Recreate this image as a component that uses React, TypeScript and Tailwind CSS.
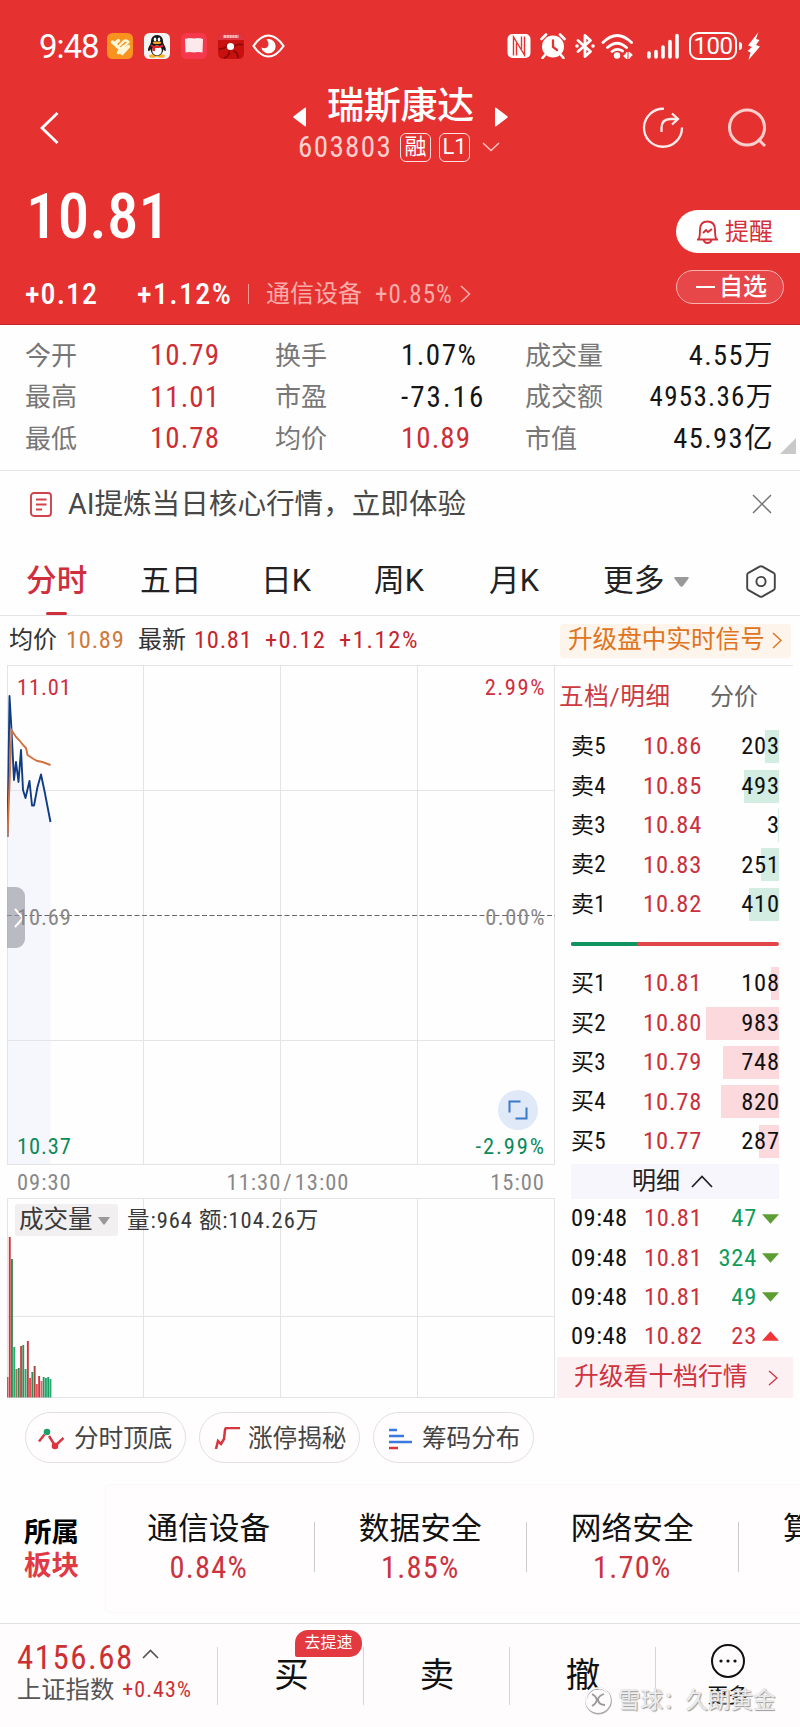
import React from 'react';

const num = "[font-family:'Roboto_Condensed','Noto_Sans_CJK_SC',sans-serif]";

const stats = [
  ['今开', '10.79', '换手', '1.07%', '成交量', '4.55万'],
  ['最高', '11.01', '市盈', '-73.16', '成交额', '4953.36万'],
  ['最低', '10.78', '均价', '10.89', '市值', '45.93亿'],
];

const sells = [
  { label: '卖5', price: '10.86', qty: 203, bar: 14 },
  { label: '卖4', price: '10.85', qty: 493, bar: 35 },
  { label: '卖3', price: '10.84', qty: 3, bar: 1 },
  { label: '卖2', price: '10.83', qty: 251, bar: 18 },
  { label: '卖1', price: '10.82', qty: 410, bar: 30 },
];

const buys = [
  { label: '买1', price: '10.81', qty: 108, bar: 8 },
  { label: '买2', price: '10.80', qty: 983, bar: 73 },
  { label: '买3', price: '10.79', qty: 748, bar: 56 },
  { label: '买4', price: '10.78', qty: 820, bar: 58 },
  { label: '买5', price: '10.77', qty: 287, bar: 20 },
];

const trades = [
  { time: '09:48', price: '10.81', qty: 47, up: false },
  { time: '09:48', price: '10.81', qty: 324, up: false },
  { time: '09:48', price: '10.81', qty: 49, up: false },
  { time: '09:48', price: '10.82', qty: 23, up: true },
];

const sectors = [
  { name: '通信设备', pct: '0.84%' },
  { name: '数据安全', pct: '1.85%' },
  { name: '网络安全', pct: '1.70%' },
];

/* x, top, colour of each minute's volume bar; all stand on y = 199.5 */
const volumes: [number, number, string][] = [
  [0, 179, '#d94a52'], [2.3, 39, '#d0353c'], [4.5, 61, '#2f8a55'], [6.8, 149, '#1fae6c'],
  [9, 171, '#a0705a'], [11.3, 170, '#2f8a55'], [13.6, 148, '#c8454a'], [15.8, 147, '#3c8a55'],
  [18.1, 171, '#1fae6c'], [20.4, 143, '#d0353c'], [22.6, 180, '#e05058'], [24.9, 174, '#2f8a55'],
  [27.2, 168, '#a0453f'], [29.4, 186, '#e8505a'], [31.7, 178, '#d0353c'], [34, 183, '#e8606a'],
  [36.2, 179, '#1f9a60'], [38.5, 180, '#1fae6c'], [40.8, 179, '#1f9a60'], [43, 181, '#1fae6c'],
];

function StatusBar() {
  return (
    <div className="flex h-[92px] items-center pl-[39px] pr-[40px] text-white">
      <span className="w-[68px] text-[33px] leading-none tracking-[-0.03em]">9:48</span>
      <div className="flex items-center gap-[11px]">
        <svg width="26" height="26" viewBox="0 0 26 26">
          <rect width="26" height="26" rx="5.500" fill="#f7931e" />
          <path d="M5.500 9L12.500 15.500M11.500 7.500l-4 3.500M11.500 19.500L17 13.500M15 20.500L21.500 13.500" stroke="#fff6d8" strokeWidth="3.400" strokeLinecap="round" fill="none" />
          <path d="M12.500 12.500l4.500-4.500q2.500-1.500 4.500 1L17 13.500" stroke="#fff6d8" strokeWidth="2.400" strokeLinecap="round" fill="none" />
        </svg>
        <svg width="26" height="26" viewBox="0 0 26 26">
          <rect width="26" height="26" rx="5.500" fill="#f4f4f4" />
          <ellipse cx="9" cy="23" rx="4" ry="1.800" fill="#f4b52a" />
          <ellipse cx="17" cy="23" rx="4" ry="1.800" fill="#f4b52a" />
          <path d="M13 2c-4 0-6 3-6 6.500 0 2-1 3-2 5s-1.500 4-.5 4.500S6 17 6.500 16c.5 4 3 7 6.500 7s6-3 6.500-7c.5 1 1.500 2.500 2 2s.5-2.500-.5-4.500-2-3-2-5C19 5 17 2 13 2z" fill="#15151a" />
          <ellipse cx="13" cy="17.500" rx="4.800" ry="5" fill="#fff" />
          <ellipse cx="11" cy="6.500" rx="1.300" ry="1.900" fill="#fff" />
          <ellipse cx="15" cy="6.500" rx="1.300" ry="1.900" fill="#fff" />
          <ellipse cx="13" cy="9.800" rx="4.300" ry="1.300" fill="#f6a821" />
          <path d="M7 11.500c4 2 8 2 12 0l.5 2c-3 1.500-6 1.800-8.500 1.400V18H8.500v-4L6.500 13z" fill="#e3262d" />
        </svg>
        <svg width="26" height="26" viewBox="0 0 26 26">
          <rect width="26" height="26" rx="5.500" fill="#f5384c" />
          <path d="M4 6Q8.500 4.500 13 5.500q4.500-1 9 .5L21.500 19.500q-4.500-1-8.500 0-4-1-8.500 0z" fill="#fbe9ec" />
        </svg>
        <svg width="26" height="26" viewBox="0 0 26 26">
          <rect width="26" height="26" rx="5.500" fill="#c8100f" />
          <path d="M0 7V5.500A5.500 5.500 0 0 1 5.500 0h15A5.500 5.500 0 0 1 26 5.500V7z" fill="#e03540" />
          <path d="M5.500 3.500h15" stroke="#f7b9b6" strokeWidth="3" strokeDasharray="2.500 .4" />
          <path d="M1 16q7 0 9-5M6 25q7-3 5-8M20 25q0-6-5-7M25 12q-6-2-9 2" stroke="#8e0808" strokeWidth="1.800" fill="none" />
          <circle cx="12.500" cy="13.500" r="3.600" fill="#fff" />
        </svg>
        <svg className="-ml-[3px]" width="33" height="24" viewBox="0 0 33 24">
          <path d="M1.500 12Q8.500 1.500 16.500 1.500T31.500 12Q24.500 22.500 16.500 22.500T1.500 12z" fill="none" stroke="#fff" strokeWidth="2.200" />
          <path d="M16.500 5a7.200 7.200 0 1 1-7.200 8.200c2.500 2 7.200 1 7.200-3 0-2-.8-3.200-2-4.700z" fill="#fff" />
        </svg>
      </div>
      <div className="ml-auto flex items-center">
        <svg width="24" height="26" viewBox="0 0 24 26">
          <rect x=".5" y="1" width="23" height="24" rx="5" fill="#fff" />
          <path d="M6.500 22.500V4L17.500 22V3.500" fill="none" stroke="#e53230" strokeWidth="1.400" />
          <path d="M9.500 22.500V10M14.500 16V3.500" fill="none" stroke="#e53230" strokeWidth="1.400" />
        </svg>
        <svg className="ml-[9px]" width="26" height="26" viewBox="0 0 26 26">
          <circle cx="13" cy="13.500" r="11" fill="#fff" />
          <path d="M1.500 6L6 1.500M24.500 6L20 1.500M5 22l-2.500 3M21 22l2.500 3" stroke="#fff" strokeWidth="2.600" strokeLinecap="round" />
          <path d="M13 7.500v6.500l4 3" stroke="#e53230" strokeWidth="2.300" fill="none" strokeLinecap="round" />
        </svg>
        <svg className="ml-[9px]" width="20" height="26" viewBox="0 0 20 26">
          <path d="M3 7.500L15.500 18.500 10 23.500V2.500L15.500 7.500 3 18.500" fill="none" stroke="#fff" strokeWidth="2.800" strokeLinejoin="round" strokeLinecap="round" />
          <circle cx="2" cy="13" r="1.800" fill="#fff" />
          <circle cx="18" cy="13" r="1.800" fill="#fff" />
        </svg>
        <svg className="ml-[6px]" width="33" height="27" viewBox="0 0 33 27">
          <path d="M2 9.500Q16 -4.500 30.500 9.500M6.500 14.500q9.500-8.500 19 0M11 18.500q5-4 10.500-.5" fill="none" stroke="#fff" strokeWidth="2.800" strokeLinecap="round" />
          <circle cx="16" cy="22.500" r="3.200" fill="#fff" />
          <path d="M26 19v7l-3.500-3M28 26v-7l3.500 3" fill="#fff" stroke="#fff" />
        </svg>
        <svg className="ml-[13px]" width="32" height="26" viewBox="0 0 32 26">
          <path d="M2 20v4M9 18.500V24M16 14v10M23 8.500V24M30 2.500V24" stroke="#fff" strokeWidth="3.600" strokeLinecap="round" />
        </svg>
        <div className="ml-[10px] flex h-[28px] w-[48px] items-center justify-center rounded-[9px] border-2 border-white text-[24px] leading-none tracking-[-0.02em]">100</div>
        <div className="ml-[2px] h-[8px] w-[3px] rounded-r bg-white" />
        <svg className="ml-[5px]" width="13" height="28" viewBox="0 0 13 28">
          <path d="M11.500 0L1 13.500l4 1.500L.5 19l3 1.500L1.500 28 13 14.500 9 13l3.500-5L9 7z" fill="#fff" />
        </svg>
      </div>
    </div>
  );
}

function Header() {
  return (
    <header className="flex h-[325px] flex-col border-b border-[#c02a2c] bg-[#e53230] text-white">
      <StatusBar />
      <div className="flex h-[72px] items-center">
        <svg className="ml-[40px]" width="20" height="34" viewBox="0 0 20 34">
          <path d="M17.500 2L2 17l15.500 15" fill="none" stroke="#fff" strokeWidth="2.800" />
        </svg>
        <div className="-mt-[3px] ml-[233px] flex w-[215px] flex-col items-center">
          <div className="flex h-[40px] w-full items-center justify-between">
            <svg className="mt-[21px]" width="13" height="20" viewBox="0 0 13 20"><path d="M13 1.500v17Q13 20 11.500 19L.7 10.800q-1-.8 0-1.600L11.500 1Q13 0 13 1.500z" fill="#fff" /></svg>
            <span className="whitespace-nowrap text-[37px] font-medium leading-none tracking-[-0.2px]">瑞斯康达</span>
            <svg className="mt-[21px]" width="13" height="20" viewBox="0 0 13 20"><path d="M0 1.500v17Q0 20 1.500 19L12.300 10.800q1-.8 0-1.600L1.500 1Q0 0 0 1.500z" fill="#fff" /></svg>
          </div>
          <div className="flex h-[40px] w-full items-center pl-[5px] pt-px">
            <span className={`${num} w-[101px] text-[29px] font-[450] leading-none tracking-[0.048em] text-[#ffd0cd]`}>603803</span>
            <span className="ml-[1px] flex h-[29px] w-[31px] items-center justify-center rounded-[6px] border-[1.500px] border-[#ffdedd] text-[22px] leading-none">融</span>
            <span className="ml-[8px] flex h-[29px] w-[31px] items-center justify-center rounded-[6px] border-[1.500px] border-[#ffdedd] text-[22px] leading-none">L1</span>
            <svg className="ml-[12px]" width="18" height="10" viewBox="0 0 18 10"><path d="M1 1l8 7.500L17 1" fill="none" stroke="#ffc4c2" strokeWidth="1.500" /></svg>
          </div>
        </div>
        <svg className="ml-[134px]" width="42" height="42" viewBox="0 0 42 42">
          <path d="M22 1.800A19 19 0 1 0 40 20.500" fill="none" stroke="#ffeceb" strokeWidth="2.300" />
          <path d="M19.500 25v-4q0-9 9-9h7M30 6.500l6 5.500-6 5.500" fill="none" stroke="#ffeceb" strokeWidth="2.300" />
        </svg>
        <svg className="ml-[43px]" width="42" height="42" viewBox="0 0 42 42">
          <circle cx="20" cy="20.500" r="17.500" fill="none" stroke="#ffcfcd" strokeWidth="3" />
          <path d="M31 32l7 7" stroke="#ffcfcd" strokeWidth="3" />
        </svg>
      </div>
      <div className="flex flex-1">
        <div className="flex flex-1 flex-col">
          <div className="flex h-[104px] items-center pl-[26px]">
            <span className={`${num} text-[63px] font-medium leading-none tracking-[0.002em]`}>10.81</span>
          </div>
          <div className="flex h-[52px] items-center whitespace-nowrap leading-none">
            <span className={`${num} w-[112px] pl-[25px] text-[30px] font-medium tracking-[0.035em]`}>+0.12</span>
            <span className={`${num} ml-[25px] w-[111px] text-[30px] font-medium tracking-[0.045em]`}>+1.12%</span>
            <span className="h-[20px] w-px bg-[#f29a98]" />
            <span className="ml-[17px] text-[24px] text-[#f9acaa]">通信设备</span>
            <span className={`${num} ml-[13px] text-[25px] tracking-[0.04em] text-[#f9acaa]`}>+0.85%</span>
            <svg className="ml-[7px]" width="11" height="18" viewBox="0 0 11 18"><path d="M1 1l8.500 8L1 17" fill="none" stroke="#f9acaa" strokeWidth="1.600" /></svg>
          </div>
        </div>
        <div className="flex w-[124px] flex-col pt-[46px]">
          <div className="flex h-[43px] items-center rounded-l-full bg-white pl-[20px] text-[#d3303a]">
            <svg width="23" height="24" viewBox="0 0 23 24">
              <path d="M1 19.500h21M3 19q1-3 1-9 0-8.500 7.500-8.500T19 10q0 6 1 9M7.500 20q1 3 4 3t4-3M7 13l3-3 2 2 4-3" fill="none" stroke="#d3303a" strokeWidth="1.900" />
            </svg>
            <span className="ml-[6px] text-[24px] leading-none">提醒</span>
          </div>
          <div className="mt-[17px] flex h-[34px] w-[108px] items-center rounded-full border border-[#f9b4b2] bg-[#e8474a] pl-[19px]">
            <span className="h-[2.500px] w-[19px] bg-white" />
            <span className="ml-[4px] text-[24px] font-medium leading-none">自选</span>
          </div>
        </div>
      </div>
    </header>
  );
}

function Stats() {
  return (
    <section className="flex h-[146px] flex-col border-b border-[#e4e4e4] pl-[25px] pt-[10px]">
      {stats.map((r, i) => (
        <div key={r[0]} className="flex h-[41.500px] items-center whitespace-nowrap leading-none">
          <span className="w-[125px] text-[26px] text-[#777]">{r[0]}</span>
          <span className={`${num} w-[125px] text-[29px] font-[450] tracking-[0.035em] text-[#cb2f35]`}>{r[1]}</span>
          <span className="w-[126px] text-[26px] text-[#777]">{r[2]}</span>
          <span className={`${num} w-[124px] text-[29px] font-[450] ${i === 2 ? 'tracking-[0.035em] text-[#cb2f35]' : i === 1 ? 'tracking-[0.07em] text-[#151515]' : 'tracking-[0.05em] text-[#151515]'}`}>{r[3]}</span>
          <span className="w-[98px] text-[26px] text-[#777]">{r[4]}</span>
          <span className={`${num} w-[151px] text-right text-[#151515] ${i === 1 ? 'text-[27px] tracking-[0.048em]' : 'text-[28.500px] tracking-[0.05em]'}`}>{r[5]}</span>
          {i === 2 && (
            <svg className="ml-[6px] mt-[20px] self-start" width="16" height="16" viewBox="0 0 16 16"><path d="M16 0v16H0z" fill="#c9c9c9" /></svg>
          )}
        </div>
      ))}
    </section>
  );
}

function AiBanner() {
  return (
    <section className="flex h-[66px] items-center pl-[30px] pr-[28px] text-[#484848]">
      <svg width="22" height="25" viewBox="0 0 22 25">
        <rect x="1" y="1" width="20" height="23" rx="3" fill="none" stroke="#d0424c" strokeWidth="1.900" />
        <path d="M6 7.500h10.500M6 12.500h10.500M6 17.500h6" stroke="#d0424c" strokeWidth="1.900" />
      </svg>
      <span className="ml-[16px] mt-px text-[28.600px] leading-none">AI提炼当日核心行情，立即体验</span>
      <svg className="ml-auto" width="20" height="20" viewBox="0 0 20 20"><path d="M1 1l18 18M19 1L1 19" stroke="#777" strokeWidth="1.500" /></svg>
    </section>
  );
}

function Tabs() {
  return (
    <nav className="flex h-[79px] items-center border-b border-[#e4e4e4] pl-[26px] pt-[10px] text-[30.700px] leading-none text-[#222]">
      <div className="relative w-[114px] font-medium text-[#cf2f3d]">
        分时
        <span className="absolute left-[20px] top-[46px] h-[3px] w-[21px] rounded-full bg-[#cf2f3d]" />
      </div>
      <div className="w-[121px]">五日</div>
      <div className="w-[113px]">日K</div>
      <div className="w-[115px]">周K</div>
      <div className="w-[114px]">月K</div>
      <div className="flex w-[143px] items-center">
        更多
        <svg className="ml-[10px] mt-[2px]" width="15" height="10" viewBox="0 0 15 10"><path d="M1 0h13q1.200.3.500 1.500L9 9q-1.500 1.500-3 0L.5 1.500Q-.2.300 1 0z" fill="#999" /></svg>
      </div>
      <svg width="30" height="33" viewBox="0 0 30 33">
        <path d="M13.500 1.600q1.500-.8 3 0l11 6.200q1.300.8 1.300 2.200v13q0 1.400-1.300 2.200l-11 6.200q-1.500.8-3 0l-11-6.200Q1.200 24.400 1.200 23V10q0-1.400 1.300-2.200z" fill="none" stroke="#444" strokeWidth="1.900" />
        <circle cx="15" cy="16.500" r="4.600" fill="none" stroke="#444" strokeWidth="1.900" />
      </svg>
    </nav>
  );
}

function QuoteLine() {
  return (
    <div className="flex h-[49px] items-center whitespace-nowrap pb-px pl-[9px] pr-[9px] text-[24px] leading-none text-[#c5262e]">
      <span className="w-[57px] text-[#333]">均价</span>
      <span className={`${num} w-[72px] text-[24.500px] font-[450] tracking-[0.03em] text-[#cf7a3a]`}>10.89</span>
      <span className="w-[56px] text-[#333]">最新</span>
      <span className={`${num} w-[71px] text-[24.500px] font-[450] tracking-[0.03em]`}>10.81</span>
      <span className={`${num} w-[74px] text-[24.500px] font-[450] tracking-[0.05em]`}>+0.12</span>
      <span className={`${num} text-[24.500px] font-[450] tracking-[0.065em]`}>+1.12%</span>
      <div className="ml-auto mt-px flex h-[34px] w-[231px] items-center rounded-[3px] bg-[#fdf5ec] pl-[8px] text-[24.600px] text-[#e07420]">
        升级盘中实时信号
        <svg className="ml-[7px]" width="10" height="17" viewBox="0 0 10 17"><path d="M1 1l8 7.500L1 16" fill="none" stroke="#e07420" strokeWidth="1.500" /></svg>
      </div>
    </div>
  );
}

function PriceChart() {
  return (
    <div className={`${num} relative h-[500px] w-[548px] text-[22.500px] font-[450] leading-none tracking-[0.04em]`}>
      <svg width="548" height="500" viewBox="0 0 548 500">
        <path d="M.8 172L3 31 5 65 7.500 115 12 117 16.500 125 19 133 27.500 140.500 34.500 109.500 38 126 43.500 156.500V500H0z" fill="#f6f6fd" />
        <path d="M.5 0V500M136.500 0V500M273.500 0V500M410.500 0V500M547.500 0V500M0 .5H548M0 125.500H548M0 375.500H548M0 499.500H548" stroke="#e4e4e6" strokeWidth="1" />
        <path d="M0 250.500H548" stroke="#666" strokeWidth="1.200" strokeDasharray="5 2.500" />
        <path d="M.5 172L2.500 31 4.500 65 7 115 9 97 11.500 117 14 85 16 125 18.500 133 22.500 116 25 140.500H27L30.500 122 34 109.500 37.500 126 43.500 157" fill="none" stroke="#103c86" strokeWidth="1.900" strokeLinejoin="round" />
        <path d="M.5 172L4.500 65 9 72l4 4 3 4 3 3 1.500 7 6 4 4 2 5 1 4 1.500 4 1.500" fill="none" stroke="#d2703e" strokeWidth="1.900" />
      </svg>
      <div className="absolute left-0 top-[222px] flex h-[61px] w-[18px] items-center justify-end rounded-r-[9px] bg-[#9a9aa4]/65">
        <svg width="14" height="20" viewBox="0 0 14 20"><path d="M4 1l8 9-8 9" fill="none" stroke="#fff" strokeWidth="2" /></svg>
      </div>
      <span className="absolute left-[10px] top-[11px] text-[#cf2f3d]">11.01</span>
      <span className="absolute right-[9px] top-[11px] tracking-[0.07em] text-[#cf2f3d]">2.99%</span>
      <span className="absolute left-[10px] top-[241px] text-[#888]">10.69</span>
      <span className="absolute right-[9px] top-[241px] tracking-[0.065em] text-[#888]">0.00%</span>
      <span className="absolute bottom-[8px] left-[10px] text-[#0b8a5a]">10.37</span>
      <span className="absolute bottom-[8px] right-[9px] tracking-[0.085em] text-[#0b8a5a]">-2.99%</span>
      <div className="absolute left-[491px] top-[425px] flex h-[40px] w-[40px] items-center justify-center rounded-full bg-[#dfe9f8]">
        <svg width="20" height="20" viewBox="0 0 20 20"><path d="M1.500 12.500v-11h11M7.500 18.500h11v-11" fill="none" stroke="#3a7bc8" strokeWidth="2" /></svg>
      </div>
    </div>
  );
}

function VolumeChart() {
  return (
    <div className="relative h-[201px] w-[548px]">
      <svg width="548" height="201" viewBox="0 0 548 201">
        <path d="M.5 0V200M136.500 0V200M273.500 0V200M410.500 0V200M547.500 0V200M0 .5H548M0 118.500H548M0 199.500H548" stroke="#e4e4e6" strokeWidth="1" />
        {volumes.map(([x, top, color]) => (
          <rect key={x} x={x - 0.5} y={top} width="1.900" height={199.5 - top} fill={color} />
        ))}
      </svg>
      <div className="absolute left-[8px] top-[6px] flex items-center whitespace-nowrap leading-none text-[#3a3a3a]">
        <span className="flex h-[32px] w-[103px] items-center rounded-[3px] bg-[#f1efef] pl-[4px] text-[24.500px]">
          成交量
          <svg className="ml-[5px] mt-[2px]" width="12" height="8" viewBox="0 0 12 8"><path d="M0 0h12L7 7q-1 1-2 0z" fill="#999" /></svg>
        </span>
        <span className={`${num} ml-[9px] text-[22.500px] tracking-[0.042em]`}>量:964 额:104.26万</span>
      </div>
    </div>
  );
}

type Level = { label: string; price: string; qty: number; bar: number };

function LevelRow({ row, tint }: { row: Level; tint: string }) {
  return (
    <div className={`${num} flex h-[39.400px] items-center text-[24.500px] font-[450] leading-none tracking-[0.035em] text-[#111]`}>
      <span className="w-[72px] text-[23px] font-normal tracking-[0.01em]">{row.label}</span>
      <span className="w-[63px] text-[#c9313d]">{row.price}</span>
      <div className="relative flex h-[33px] flex-1 items-center justify-end">
        <span className={`absolute right-0 top-0 h-full ${tint}`} style={{ width: row.bar }} />
        <span className="relative -mr-px">{row.qty}</span>
      </div>
    </div>
  );
}

function OrderBook() {
  return (
    <aside className="flex w-[238px] flex-col border-t border-[#e4e4e6]">
      <div className="flex h-[61px] items-center pl-[4px] pt-px leading-none">
        <span className="w-[151px] text-[24.600px] tracking-[0.025em] text-[#cc3a40]">五档/明细</span>
        <span className="text-[24px] text-[#666]">分价</span>
      </div>
      <div className="flex flex-col pl-[16px] pr-[14px]">
        {sells.map((r) => <LevelRow key={r.label} row={r} tint="bg-[#d3ede3]" />)}
        <div className="flex h-[40px] items-center">
          <div className="flex h-[4px] w-full overflow-hidden rounded-full bg-[#e0474b]">
            <span className="w-[66px] bg-[#0f9460]" />
          </div>
        </div>
        {buys.map((r) => <LevelRow key={r.label} row={r} tint="bg-[#fbd9dd]" />)}
        <div className="mt-[3px] flex h-[35px] items-center justify-center bg-[#f6f6fc] pr-[5px] text-[24px] leading-none text-[#222]">
          明细
          <svg className="ml-[11px]" width="22" height="13" viewBox="0 0 22 13"><path d="M1 12L11 1.500 21 12" fill="none" stroke="#222" strokeWidth="1.800" /></svg>
        </div>
        <div className="flex flex-col">
          {trades.map((t, i) => (
            <div key={i} className={`${num} flex h-[39.300px] items-center text-[24.500px] font-[450] leading-none tracking-[0.03em] text-[#111]`}>
              <span className="w-[73px] tracking-[0.02em]">{t.time}</span>
              <span className="w-[60px] text-[#c9313d]">{t.price}</span>
              <span className={`flex-1 text-right ${t.up ? 'text-[#cf3340]' : 'text-[#0f9c5c]'}`}>{t.qty}</span>
              {t.up ? (
                <svg className="ml-[5px]" width="17" height="10" viewBox="0 0 16 9"><path d="M8 0l8 9H0z" fill="#ee3636" /></svg>
              ) : (
                <svg className="ml-[5px]" width="17" height="10" viewBox="0 0 16 9"><path d="M0 0h16L8 9z" fill="#5c9e33" /></svg>
              )}
            </div>
          ))}
        </div>
      </div>
      <div className="mb-[2px] ml-[2px] mt-auto flex h-[41px] items-center bg-[#fdf0f3] pl-[17px] text-[24.800px] leading-none text-[#cf3340]">
        升级看十档行情
        <svg className="ml-auto mr-[15px]" width="10" height="16" viewBox="0 0 10 16"><path d="M1 1l8 7-8 7" fill="none" stroke="#cf3340" strokeWidth="1.300" /></svg>
      </div>
    </aside>
  );
}

function Pills() {
  const pill = 'flex h-[51px] w-[161px] items-center rounded-full border border-[#e2dfe0] bg-[#fffdfd] pl-[12px] text-[24.600px] leading-none text-[#444]';
  return (
    <div className="flex h-[72px] gap-[13px] pl-[25px] pt-[12px]">
      <div className={pill}>
        <svg className="mt-[2px]" width="26" height="22" viewBox="0 0 26 22">
          <path d="M1 13.500l5.500-7M11 8l5 8M18 17l7.500-7" stroke="#d23a45" strokeWidth="2.500" />
          <circle cx="9" cy="4" r="3.300" fill="#1fa06a" />
          <circle cx="17" cy="18" r="3.300" fill="#e0323c" />
        </svg>
        <span className="ml-[10px] mt-[4px]">分时顶底</span>
      </div>
      <div className={pill}>
        <svg className="ml-[2px]" width="26" height="22" viewBox="0 0 26 22"><path d="M2 22l2-8 3 3 3-5 1-9q.2-2 2-2h13" fill="none" stroke="#d8353f" strokeWidth="2.500" /></svg>
        <span className="ml-[8px] mt-[4px]">涨停揭秘</span>
      </div>
      <div className={pill}>
        <svg className="ml-px mt-[2px]" width="26" height="22" viewBox="0 0 26 22"><path d="M2 2h8M2 8h15M2 14h23" stroke="#3b78e0" strokeWidth="2.500" /><path d="M2 20h9" stroke="#d8353f" strokeWidth="2.500" /></svg>
        <span className="ml-[9px] mt-[4px]">筹码分布</span>
      </div>
    </div>
  );
}

function Sectors() {
  return (
    <section className="flex h-[152px] overflow-hidden border-b border-[#e2e2e2] pt-[12px]">
      <div className="flex w-[105px] shrink-0 flex-col pl-[24px] pt-[32px] text-[27.500px] font-bold leading-[33px]">
        <span className="text-black">所属</span>
        <span className="text-[#e03a44]">板块</span>
      </div>
      <div className="flex h-[129px] shrink-0 rounded-l-[6px] border border-[#fbf8f8] bg-[#fffdfd] leading-none">
        {sectors.map((s, i) => (
          <div key={s.name} className={`flex items-center pb-[3px] ${i === 0 ? 'w-[209px]' : 'w-[212px]'}`}>
            <div className={`flex flex-1 flex-col items-center pt-[3px] ${i === 0 ? 'pr-[2px]' : ''}`}>
              <span className="text-[30.700px] text-[#111]">{s.name}</span>
              <span className={`${num} mt-[8px] text-[30.500px] font-[450] tracking-[0.04em] text-[#cb3340]`}>{s.pct}</span>
            </div>
            <span className="h-[50px] w-[1.500px] bg-[#ccc]" />
          </div>
        ))}
        <div className="w-[160px] shrink-0 whitespace-nowrap pl-[44px] pt-[29px] text-[30.700px] text-[#111]">算力概念</div>
      </div>
    </section>
  );
}

function BottomBar() {
  return (
    <footer className="relative flex h-[103px] items-center bg-[#fefcfd] leading-none text-[#111]">
      <div className="flex w-[217px] flex-col pb-[8px] pl-[17px]">
        <div className="flex items-center">
          <span className={`${num} text-[33px] font-[450] tracking-[0.045em] text-[#cb3034]`}>4156.68</span>
          <svg className="-mt-[6px] ml-[8px]" width="17" height="10" viewBox="0 0 17 10"><path d="M1 9l7.500-7.500L16 9" fill="none" stroke="#555" strokeWidth="1.700" /></svg>
        </div>
        <div className="mt-[4px] flex items-center">
          <span className="text-[24.300px] text-[#555]">上证指数</span>
          <span className={`${num} ml-[8px] mt-px text-[22px] font-[450] tracking-[0.05em] text-[#cb3034]`}>+0.43%</span>
        </div>
      </div>
      <div className="relative flex h-[58px] w-[146px] items-center justify-center border-l border-[#d5d5d5] text-[34.500px]">
        <span className="ml-[2px]">买</span>
        <span className="absolute -top-[17px] left-[77px] flex h-[27px] w-[67px] items-center justify-center rounded-[13px] rounded-bl-[2px] bg-[#e33a42] text-[16px] text-white">去提速</span>
      </div>
      <div className="flex h-[58px] w-[146px] items-center justify-center border-l border-[#d5d5d5] pl-px text-[34.500px]">卖</div>
      <div className="flex h-[58px] w-[146px] items-center justify-center border-l border-[#d5d5d5] pl-px text-[34.500px]">撤</div>
      <div className="flex h-[58px] w-[145px] flex-col items-center border-l border-[#d5d5d5]">
        <svg className="-mt-[4px] shrink-0" width="36" height="36" viewBox="0 0 36 36">
          <circle cx="18" cy="18" r="16" fill="none" stroke="#111" strokeWidth="2" />
          <path d="M11 18h.01M18 18h.01M25 18h.01" stroke="#111" strokeWidth="3.200" strokeLinecap="round" />
        </svg>
        <span className="mt-[7px] text-[20.500px]">更多</span>
      </div>
      <div className="absolute left-[584px] top-[62px] flex items-center whitespace-nowrap text-[22.500px] text-white/80 [text-shadow:1px_1px_1px_#999,0_0_1px_#aaa]">
        <svg width="29" height="29" viewBox="0 0 29 29">
          <circle cx="14.500" cy="15" r="12.500" fill="none" stroke="#aaa" strokeWidth="1.800" />
          <circle cx="14" cy="14" r="12" fill="none" stroke="#fff" strokeWidth="1.600" />
          <path d="M8 8q4 2 5 6-1 4-5 6M20 8q-6 2-6 6 1 5 7 5" fill="none" stroke="#999" strokeWidth="1.800" />
        </svg>
        <span className="ml-[5px]">雪球：久朗黄金</span>
      </div>
    </footer>
  );
}

export default function App() {
  return (
    <main lang="zh-CN" className="flex h-[1727px] w-[800px] flex-col overflow-hidden bg-[#fffefe] [font-family:Roboto,'Noto_Sans_CJK_SC',sans-serif]">
      <Header />
      <Stats />
      <AiBanner />
      <Tabs />
      <QuoteLine />
      <div className="flex h-[735px] shrink-0 pl-[7px]">
        <div className="flex w-[548px] flex-col">
          <PriceChart />
          <div className={`${num} flex h-[33px] items-center justify-between pl-[10px] pr-[10px] pt-px text-[22.500px] font-[450] leading-none tracking-[0.045em] text-[#888]`}>
            <span>09:30</span>
            <span className="ml-[14px] flex gap-[2px]"><span>11:30</span><span>/</span><span>13:00</span></span>
            <span>15:00</span>
          </div>
          <VolumeChart />
        </div>
        <OrderBook />
      </div>
      <Pills />
      <Sectors />
      <BottomBar />
    </main>
  );
}
